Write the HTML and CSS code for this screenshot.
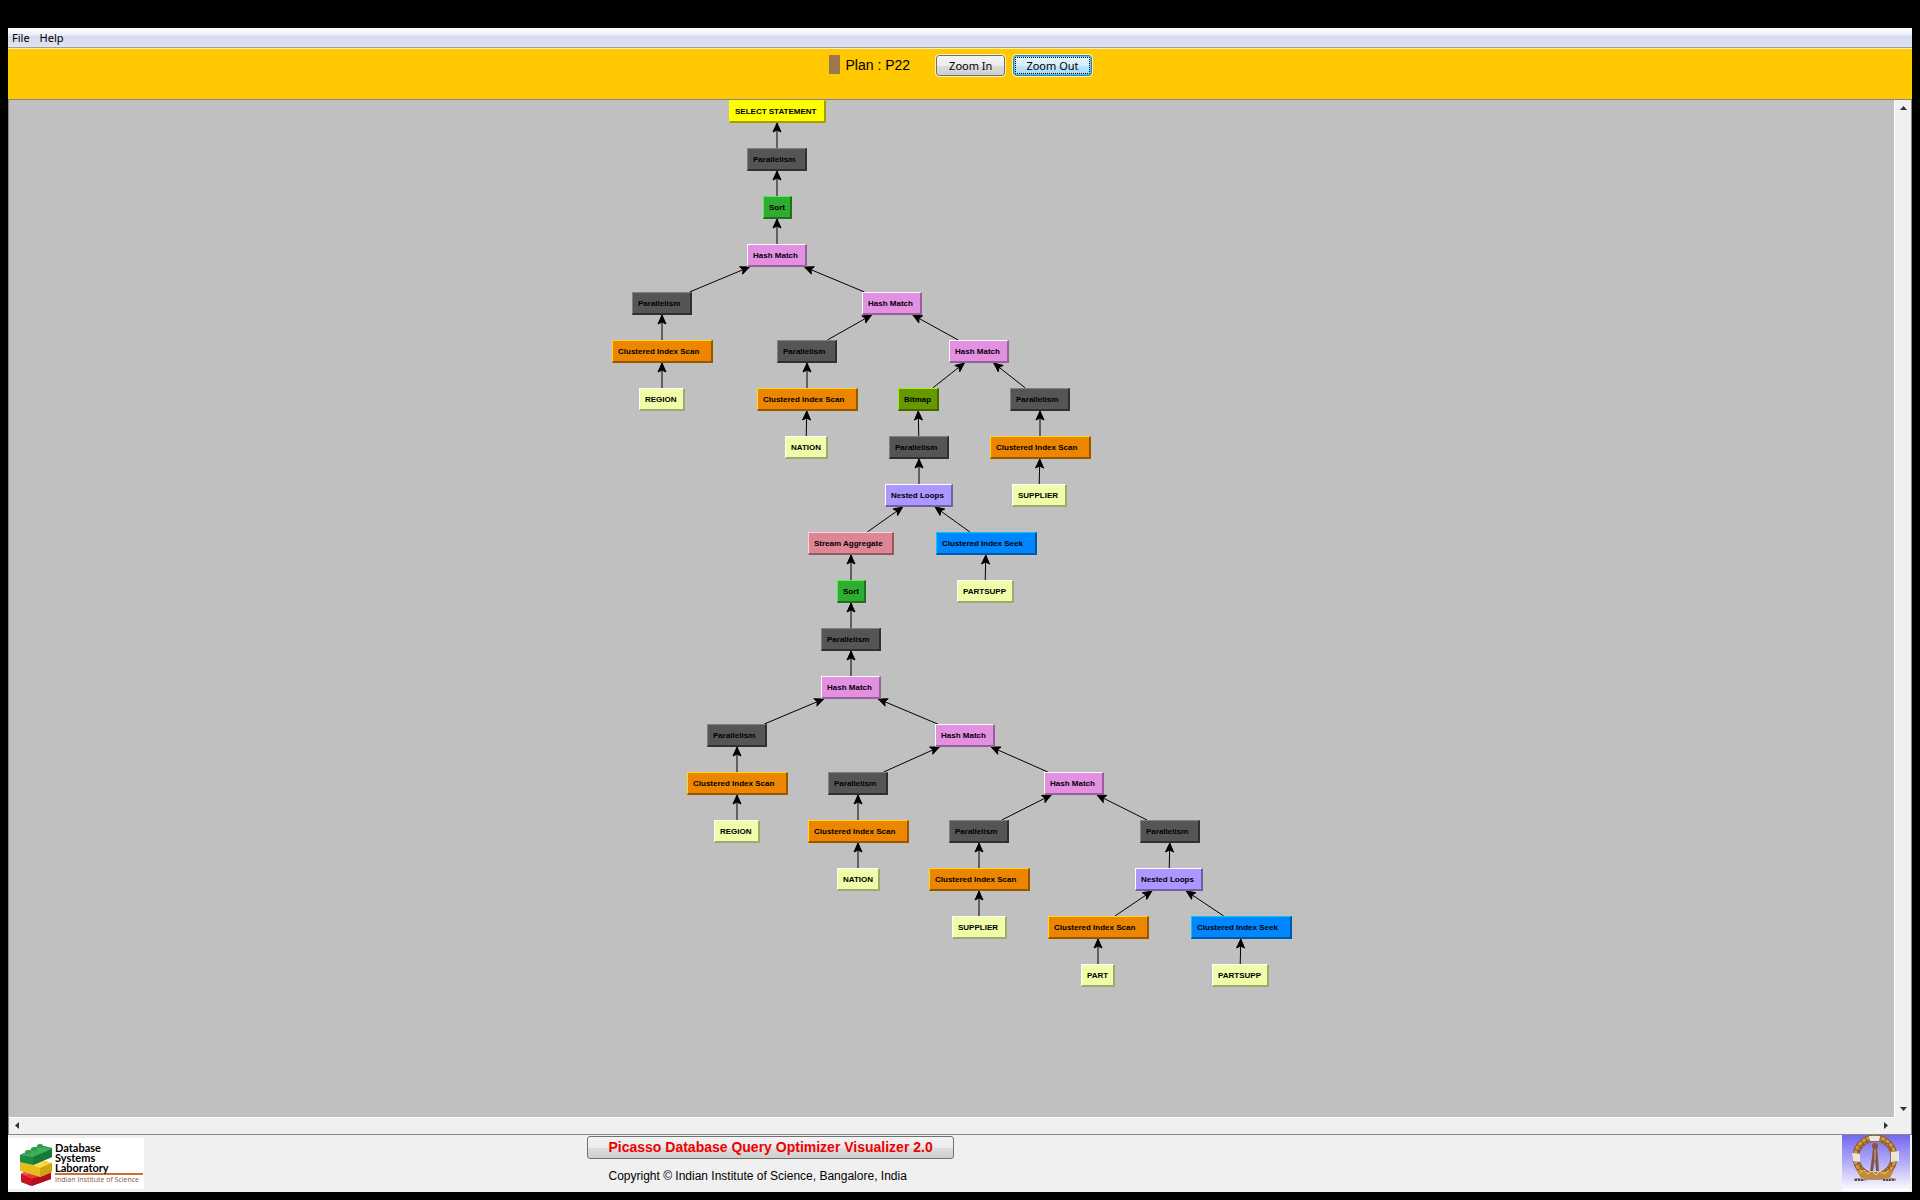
FILE: index.html
```html
<!DOCTYPE html>
<html lang="en">
<head>
    <meta charset="UTF-8">
    <title>Picasso - Plan P22</title>
    <link rel="stylesheet" href="styles.css">
</head>
<body>
<div class="window">
    <nav class="menubar">
        <button type="button" class="menu">File</button>
        <button type="button" class="menu">Help</button>
    </nav>

    <header class="toolbar">
        <span class="plan-color"></span>
        <span class="plan-name">Plan : P22</span>
        <button type="button" class="zoom">Zoom In</button>
        <button type="button" class="zoom zoom-focused">Zoom Out</button>
    </header>

    <main class="viewer">
        <div class="canvas" id="canvas">
            <svg class="edges" id="edges"></svg>
        </div>
        <div class="scrollbar vertical">
            <svg width="7" height="4"><path d="M0 4L3.5 0L7 4z" fill="#333"/></svg>
            <svg width="7" height="4"><path d="M0 0L3.5 4L7 0z" fill="#333"/></svg>
        </div>
        <div class="scrollbar horizontal">
            <svg width="4" height="7"><path d="M4 0L0 3.5L4 7z" fill="#333"/></svg>
            <svg width="4" height="7"><path d="M0 0L4 3.5L0 7z" fill="#333"/></svg>
        </div>
    </main>

    <footer class="footer">
        <div class="footer-left">
            <div class="lab-logo">
                <svg class="bricks" width="34" height="44" viewBox="0 0 34 44">
                    <path d="M2 31l10 -6 20 4v7l-20 7 -10 -4z" fill="#c81420"/>
                    <path d="M2 31l10 -5 20 3 -19 7z" fill="#e8323a"/>
                    <path d="M13 36l19 -7v7l-19 7z" fill="#b40e1a"/>
                    <path d="M1 18l11 -4 21 6v9l-12 5 -20 -6z" fill="#e6bd1c"/>
                    <path d="M1 18l11 -4 21 6 -12 5z" fill="#f7dc45"/>
                    <path d="M21 25l12 -5v9l-12 5z" fill="#cda316"/>
                    <path d="M1 12l20 -10 12 3v9l-19 8 -13 -3z" fill="#208a42"/>
                    <path d="M1 12l20 -9 12 3 -19 8z" fill="#42ad5b"/>
                    <path d="M14 14l19 -8v8l-19 8z" fill="#167a38"/>
                    <ellipse cx="9" cy="9" rx="3" ry="2" fill="#2f9d4c"/>
                    <ellipse cx="15" cy="6" rx="3" ry="2" fill="#2f9d4c"/>
                    <ellipse cx="21" cy="3" rx="3" ry="2" fill="#2f9d4c"/>
                    <ellipse cx="26" cy="20" rx="3" ry="1" fill="#f2d23a"/>
                    <ellipse cx="7" cy="31" rx="3" ry="1" fill="#f0555a"/>
                </svg>
                <div class="lab-text">
                    <p class="lab-name">Database<br>Systems<br>Laboratory</p>
                    <p class="lab-institute">Indian Institute of Science</p>
                </div>
            </div>
        </div>
        <div class="footer-right">
            <div class="about">
                <button type="button" class="product">Picasso Database Query Optimizer Visualizer 2.0</button>
                <p class="copyright">Copyright © Indian Institute of Science, Bangalore, India</p>
            </div>
            <svg class="emblem" width="68" height="56" viewBox="0 0 68 56">
                <defs>
                    <linearGradient id="sky" x1="0" y1="0" x2="0" y2="1">
                        <stop offset="0" stop-color="#7468ee"/>
                        <stop offset="0.5" stop-color="#b5aef8"/>
                        <stop offset="1" stop-color="#ffffff"/>
                    </linearGradient>
                </defs>
                <rect width="68" height="56" fill="url(#sky)"/>
                <circle cx="33" cy="22" r="19" fill="none" stroke="#8a5a24" stroke-width="7"/>
                <circle cx="33" cy="22" r="20" fill="none" stroke="#d29a48" stroke-width="3" stroke-dasharray="4 1"/>
                <circle cx="33" cy="22" r="17" fill="none" stroke="#b47c34" stroke-width="2" stroke-dasharray="2 2"/>
                <path d="M27 1h11l-1 5h-9z" fill="#e8e8e4"/>
                <path d="M10 18l8 1v8l-7 -1zM49 17l8 -1v10l-8 1z" fill="#e6e6df"/>
                <path d="M14 35q19 5 38 0l-4 8q-15 4 -29 0z" fill="#c58b34"/>
                <path d="M18 38l4 -3 4 4 4 -3 4 4 4 -4 4 3 5 -4" fill="none" stroke="#f0ce80" stroke-width="1"/>
                <path d="M31 12h4l1 10 1 14h-3l-1 -12 -2 12h-3l2 -14z" fill="#80564b"/>
                <path d="M33 13v12" stroke="#d9a887" stroke-width="1"/>
                <circle cx="33" cy="11" r="3" fill="#8f5530"/>
                <path d="M12 45q4 -2 9 0l13 -3 12 3q4 -2 8 0" fill="none" stroke="#a9877a" stroke-width="2"/>
                <path d="M13 45h9M41 45h12" stroke="#5f4a50" stroke-width="2" stroke-dasharray="2 1"/>
            </svg>
        </div>
    </footer>
</div>
<script src="plan.js"></script>
</body>
</html>
```

FILE: styles.css
```css
body {
    margin: 0;
    background-color: #000;
    font-family: "Liberation Sans", Arial, sans-serif;
    color: #000;
}
p {
    margin: 0;
}
button {
    font-family: inherit;
    color: inherit;
}
.window {
    box-sizing: border-box;
    height: 100vh;
    border: 8px solid #000;
    border-top-width: 28px;
    display: flex;
    flex-direction: column;
    background-color: #f0f0f0;
}

/* menu bar */
.menubar {
    display: flex;
    gap: 10px;
    height: 19px;
    padding-left: 4px;
    background: linear-gradient(#fff 0%, #eef0f7 35%, #d5dbed 45%, #dfe4f4 100%);
    border-bottom: 1px solid #a0a0a0;
}
.menu {
    padding: 0;
    border: none;
    background: none;
    font-family: "Noto Sans", sans-serif;
    font-size: 11px;
    line-height: 19px;
}

/* plan name and zoom buttons */
.toolbar {
    display: flex;
    justify-content: center;
    align-items: flex-start;
    height: 44px;
    padding-top: 6px;
    background-color: #ffc800;
    border-top: 1px solid #fff0b8;
}
.plan-color {
    width: 11px;
    height: 19px;
    margin-right: 6px;
    background-color: #9c7850;
}
.plan-name {
    margin-right: 26px;
    font-size: 14px;
    line-height: 20px;
}
.zoom {
    box-sizing: border-box;
    height: 21px;
    padding: 0 12px;
    border: 1px solid #707070;
    border-radius: 3px;
    outline: 1px solid #fdf0c0;
    background: linear-gradient(#f4f4f4 0%, #ebebeb 50%, #dddddd 51%, #cfcfcf 100%);
    font-family: "Noto Sans", sans-serif;
    font-size: 11px;
    line-height: 17px;
}
.zoom-focused {
    margin-left: 8px;
    border-color: #3c7fb1;
    background: linear-gradient(#eaf6fd 0%, #d9f0fc 50%, #bee6fd 51%, #a7d9f5 100%);
    box-shadow: inset 0 0 0 1px #48c8f0;
    position: relative;
}
.zoom-focused::after {
    content: "";
    position: absolute;
    inset: 1px;
    border: 1px dotted #000;
}

/* plan tree */
.viewer {
    flex: 1;
    min-height: 0;
    display: grid;
    grid-template-columns: 1fr 17px;
    grid-template-rows: 1fr 17px;
    border: 1px solid #828790;
}
.canvas {
    position: relative;
    overflow: hidden;
    background-color: #c0c0c0;
}
.edges {
    position: absolute;
    left: 0;
    top: 0;
    width: 100%;
    height: 100%;
}
.node {
    box-sizing: border-box;
    position: absolute;
    height: 23px;
    padding-left: 5px;
    border: 1px solid;
    border-right-width: 2px;
    border-bottom-width: 2px;
    font-size: 8px;
    font-weight: bold;
    line-height: 21px;
    white-space: nowrap;
}
.select {
    background-color: #ffff00;
    border-color: #ffff00 #a0a000 #a0a000 #ffff00;
}
.parallelism {
    background-color: #555;
    border-color: #808080 #303030 #303030 #808080;
}
.sort {
    background-color: #30ac30;
    border-color: #50f050 #207020 #207020 #50f050;
}
.hash {
    background-color: #e390e3;
    border-color: #ffffff #986098 #986098 #ffffff;
}
.scan {
    background-color: #ec8600;
    border-color: #ffdc10 #985600 #985600 #ffdc10;
}
.table {
    background-color: #f1fca9;
    border-color: #ffffff #a0a870 #a0a870 #ffffff;
}
.bitmap {
    background-color: #669900;
    border-color: #a8ee00 #446600 #446600 #a8ee00;
}
.nested {
    background-color: #ac96ff;
    border-color: #ffffff #7060a8 #7060a8 #ffffff;
}
.stream {
    background-color: #dc8696;
    border-color: #ffd0dc #945864 #945864 #ffd0dc;
}
.seek {
    background-color: #0086ff;
    border-color: #00c8ff #0058a8 #0058a8 #00c8ff;
}

/* scrollbars */
.scrollbar {
    display: flex;
    justify-content: space-between;
    align-items: center;
    box-sizing: border-box;
    background-color: #f0f0f0;
}
.vertical {
    flex-direction: column;
    padding: 6px 0;
    border-left: 1px solid #fff;
}
.horizontal {
    padding: 0 6px 2px;
    border-top: 1px solid #fff;
}

/* footer */
.footer {
    display: grid;
    grid-template-columns: 7fr 16fr;
    height: 57px;
}
.lab-logo {
    display: flex;
    gap: 2px;
    box-sizing: border-box;
    width: 136px;
    height: 51px;
    margin-top: 3px;
    padding: 5px 1px 0 11px;
    background-color: #fff;
}
.bricks {
    flex: none;
}
.lab-text {
    flex: 1;
    white-space: nowrap;
}
.lab-name {
    font-family: Lato, sans-serif;
    font-size: 11px;
    font-weight: bold;
    line-height: 10px;
    border-bottom: 2px solid #cc7038;
}
.lab-institute {
    font-family: "Open Sans", sans-serif;
    font-size: 7px;
    line-height: 10px;
    color: #8c5040;
}
.footer-right {
    display: flex;
    justify-content: space-between;
    padding-right: 2px;
}
.about {
    padding-top: 1px;
}
.product {
    display: block;
    box-sizing: border-box;
    height: 23px;
    padding: 0 20px;
    border: 1px solid #707070;
    border-radius: 3px;
    background: linear-gradient(#f4f4f4 0%, #ebebeb 50%, #dddddd 51%, #cfcfcf 100%);
    color: #f00000;
    font-size: 14px;
    font-weight: bold;
    line-height: 19px;
}
.copyright {
    padding: 9px 0 0 21px;
    font-size: 12px;
    line-height: 16px;
}
```

FILE: plan.js
```javascript
const ROW_HEIGHT = 48;
const NODE_HEIGHT = 23;

const WIDTHS = {
    select: 97, parallelism: 60, sort: 29, hash: 60, scan: 101, bitmap: 41,
    nested: 68, stream: 86, seek: 101,
    REGION: 46, NATION: 43, SUPPLIER: 55, PARTSUPP: 57, PART: 34
};

// label, type, left, row, index of the parent node
const nodes = [
    ['SELECT STATEMENT', 'select', 720, 0, null],
    ['Parallelism', 'parallelism', 738, 1, 0],
    ['Sort', 'sort', 754, 2, 1],
    ['Hash Match', 'hash', 738, 3, 2],
    ['Parallelism', 'parallelism', 623, 4, 3],
    ['Clustered Index Scan', 'scan', 603, 5, 4],
    ['REGION', 'table', 630, 6, 5],
    ['Hash Match', 'hash', 853, 4, 3],
    ['Parallelism', 'parallelism', 768, 5, 7],
    ['Clustered Index Scan', 'scan', 748, 6, 8],
    ['NATION', 'table', 776, 7, 9],
    ['Hash Match', 'hash', 940, 5, 7],
    ['Parallelism', 'parallelism', 1001, 6, 11],
    ['Clustered Index Scan', 'scan', 981, 7, 12],
    ['SUPPLIER', 'table', 1003, 8, 13],
    ['Bitmap', 'bitmap', 889, 6, 11],
    ['Parallelism', 'parallelism', 880, 7, 15],
    ['Nested Loops', 'nested', 876, 8, 16],
    ['Stream Aggregate', 'stream', 799, 9, 17],
    ['Clustered Index Seek', 'seek', 927, 9, 17],
    ['PARTSUPP', 'table', 948, 10, 19],
    ['Sort', 'sort', 828, 10, 18],
    ['Parallelism', 'parallelism', 812, 11, 21],
    ['Hash Match', 'hash', 812, 12, 22],
    ['Parallelism', 'parallelism', 698, 13, 23],
    ['Clustered Index Scan', 'scan', 678, 14, 24],
    ['REGION', 'table', 705, 15, 25],
    ['Hash Match', 'hash', 926, 13, 23],
    ['Parallelism', 'parallelism', 819, 14, 27],
    ['Clustered Index Scan', 'scan', 799, 15, 28],
    ['NATION', 'table', 828, 16, 29],
    ['Hash Match', 'hash', 1035, 14, 27],
    ['Parallelism', 'parallelism', 940, 15, 31],
    ['Clustered Index Scan', 'scan', 920, 16, 32],
    ['SUPPLIER', 'table', 943, 17, 33],
    ['Parallelism', 'parallelism', 1131, 15, 31],
    ['Nested Loops', 'nested', 1126, 16, 35],
    ['Clustered Index Scan', 'scan', 1039, 17, 36],
    ['PART', 'table', 1072, 18, 37],
    ['Clustered Index Seek', 'seek', 1182, 17, 36],
    ['PARTSUPP', 'table', 1203, 18, 39]
].map(([label, type, left, row, parent]) => {
    const width = WIDTHS[type] || WIDTHS[label];
    return { label, type, left, width, parent, top: row * ROW_HEIGHT, center: left + Math.floor(width / 2) };
});

const canvas = document.getElementById('canvas');
const edges = document.getElementById('edges');

function addPath(d, fill) {
    const path = document.createElementNS('http://www.w3.org/2000/svg', 'path');
    path.setAttribute('d', d);
    path.setAttribute('fill', fill);
    path.setAttribute('stroke', '#000');
    edges.appendChild(path);
}

// the line runs centre to centre, cut off at the two boxes
function drawEdge(child, parent) {
    const slope = (parent.center - child.center) / ROW_HEIGHT;
    const half = NODE_HEIGHT / 2;
    const x1 = child.center + slope * half;
    const y1 = child.top;
    const x2 = parent.center - slope * half;
    const y2 = parent.top + NODE_HEIGHT;
    addPath(`M${x1} ${y1}L${x2} ${y2}`, 'none');

    const length = Math.hypot(x2 - x1, y2 - y1);
    const ux = (x2 - x1) / length;
    const uy = (y2 - y1) / length;
    const at = (back, side) => `${x2 - ux * back - uy * side} ${y2 - uy * back + ux * side}`;
    addPath(`M${at(0, 0)}L${at(9, 4)}L${at(7, 0)}L${at(9, -4)}z`, '#000');
}

nodes.forEach(node => {
    const box = document.createElement('div');
    box.className = 'node ' + node.type;
    box.textContent = node.label;
    box.style.left = node.left + 'px';
    box.style.top = node.top + 'px';
    box.style.width = node.width + 'px';
    canvas.appendChild(box);
    if (node.parent !== null) {
        drawEdge(node, nodes[node.parent]);
    }
});
```
